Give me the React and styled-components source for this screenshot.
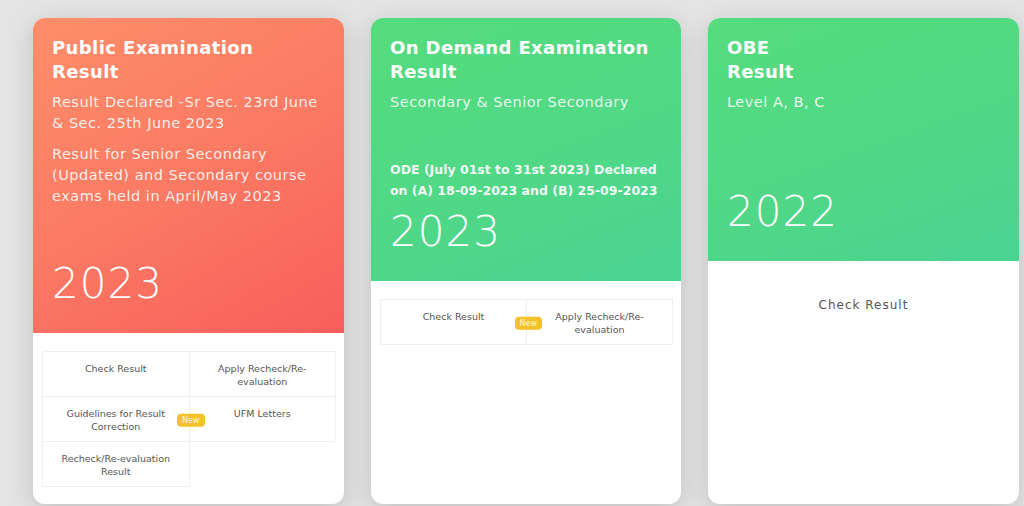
import React from 'react';
import styled, { createGlobalStyle } from 'styled-components';

const GlobalStyle = createGlobalStyle`
	html, body {
		margin: 0;
		padding: 0;
		background: #e4e4e4;
		font-family: 'DejaVu Sans', 'Open Sans', sans-serif;
		overflow: hidden;
	}
`;

const cards = [
	{
		id: 'public',
		tone: 'orange',
		title: ['Public Examination', 'Result'],
		headHeight: 315,
		notes: [
			'Result Declared -Sr Sec. 23rd June & Sec. 25th June 2023',
			'Result for Senior Secondary (Updated) and Secondary course exams held in April/May 2023',
		],
		year: '2023',
		links: [
			{ label: 'Check Result' },
			{ label: 'Apply Recheck/Re-evaluation' },
			{ label: 'Guidelines for Result Correction', isNew: true },
			{ label: 'UFM Letters' },
			{ label: 'Recheck/Re-evaluation Result' },
		],
	},
	{
		id: 'ode',
		tone: 'green',
		title: ['On Demand Examination', 'Result'],
		headHeight: 263,
		notes: ['Secondary & Senior Secondary'],
		strong: ['ODE (July 01st to 31st 2023) Declared', 'on (A) 18-09-2023 and (B) 25-09-2023'],
		year: '2023',
		links: [
			{ label: 'Check Result', isNew: true },
			{ label: 'Apply Recheck/Re-evaluation' },
		],
	},
	{
		id: 'obe',
		tone: 'green',
		title: ['OBE', 'Result'],
		headHeight: 243,
		notes: ['Level A, B, C'],
		year: '2022',
		single: 'Check Result',
	},
];

const gradients = {
	orange: 'linear-gradient(150deg, #fd8e6a 0%, #fb7a63 50%, #f85e5c 100%)',
	green: 'linear-gradient(160deg, #55dc7d 0%, #50d886 55%, #4bd393 100%)',
};

const App = () => (
	<>
		<GlobalStyle />
		<Page>
			{cards.map((card) => (
				<Card key={card.id}>
					<Head tone={card.tone} height={card.headHeight}>
						<Title>
							{card.title[0]}
							<br />
							{card.title[1]}
						</Title>
						{card.notes.map((n) => (
							<Note key={n}>{n}</Note>
						))}
						{card.strong && (
							<Strong>
								{card.strong[0]}
								<br />
								{card.strong[1]}
							</Strong>
						)}
						<Year>{card.year}</Year>
					</Head>
					{card.links ? (
						<LinkGrid>
							{card.links.map((l) => (
								<Cell key={l.label}>
									{l.label}
									{l.isNew && <Badge>New</Badge>}
								</Cell>
							))}
						</LinkGrid>
					) : (
						<Single>{card.single}</Single>
					)}
				</Card>
			))}
		</Page>
	</>
);

const Page = styled.main`
	display: grid;
	grid-template-columns: 311px 310px 311px;
	gap: 27px;
	padding: 18px 0 0 33px;
	height: 506px;
	box-sizing: border-box;
`;

const Card = styled.section`
	background: #fff;
	border-radius: 12px;
	height: 486px;
	overflow: hidden;
	box-shadow: 0 6px 26px rgba(0, 0, 0, 0.16);
`;

const Head = styled.div`
	display: flex;
	flex-direction: column;
	box-sizing: border-box;
	height: ${(p) => p.height}px;
	padding: 18px 19px 0;
	background: ${(p) => gradients[p.tone]};
	color: #fff;
`;

const Title = styled.h2`
	margin: 0 0 8px;
	font-size: 18px;
	line-height: 24px;
	font-weight: 700;
	letter-spacing: 0.4px;
`;

const Note = styled.p`
	margin: 0 0 10px;
	font-size: 14.5px;
	line-height: 21px;
	color: rgba(255, 255, 255, 0.88);
	letter-spacing: 0.5px;
`;

const Strong = styled.p`
	margin: 36px 0 0;
	font-size: 12.5px;
	line-height: 21px;
	font-weight: 700;
	white-space: nowrap;
	color: rgba(255, 255, 255, 0.94);
`;

const Year = styled.div`
	margin-top: auto;
	margin-bottom: 24px;
	font-size: 42px;
	line-height: 50px;
	font-weight: 200;
	letter-spacing: 1px;
`;

const LinkGrid = styled.div`
	display: grid;
	grid-template-columns: 1fr 1fr;
	margin: 18px 9px 0;
	grid-auto-rows: 45px;
`;

const Cell = styled.div`
	position: relative;
	box-sizing: border-box;
	padding: 10px 16px 0;
	border: 1px solid #efefef;
	margin: 0 -1px -1px 0;
	text-align: center;
	font-size: 9.5px;
	line-height: 13px;
	color: #555;
`;

const Badge = styled.span`
	position: absolute;
	right: -16px;
	top: 50%;
	transform: translateY(-40%);
	z-index: 1;
	padding: 1px 5px;
	border-radius: 4px;
	background: #f3c12a;
	color: #fff6d6;
	font-size: 8px;
	line-height: 11px;
`;

const Single = styled.div`
	padding-top: 37px;
	text-align: center;
	font-size: 12px;
	letter-spacing: 1px;
	color: #555;
`;

export default App;
